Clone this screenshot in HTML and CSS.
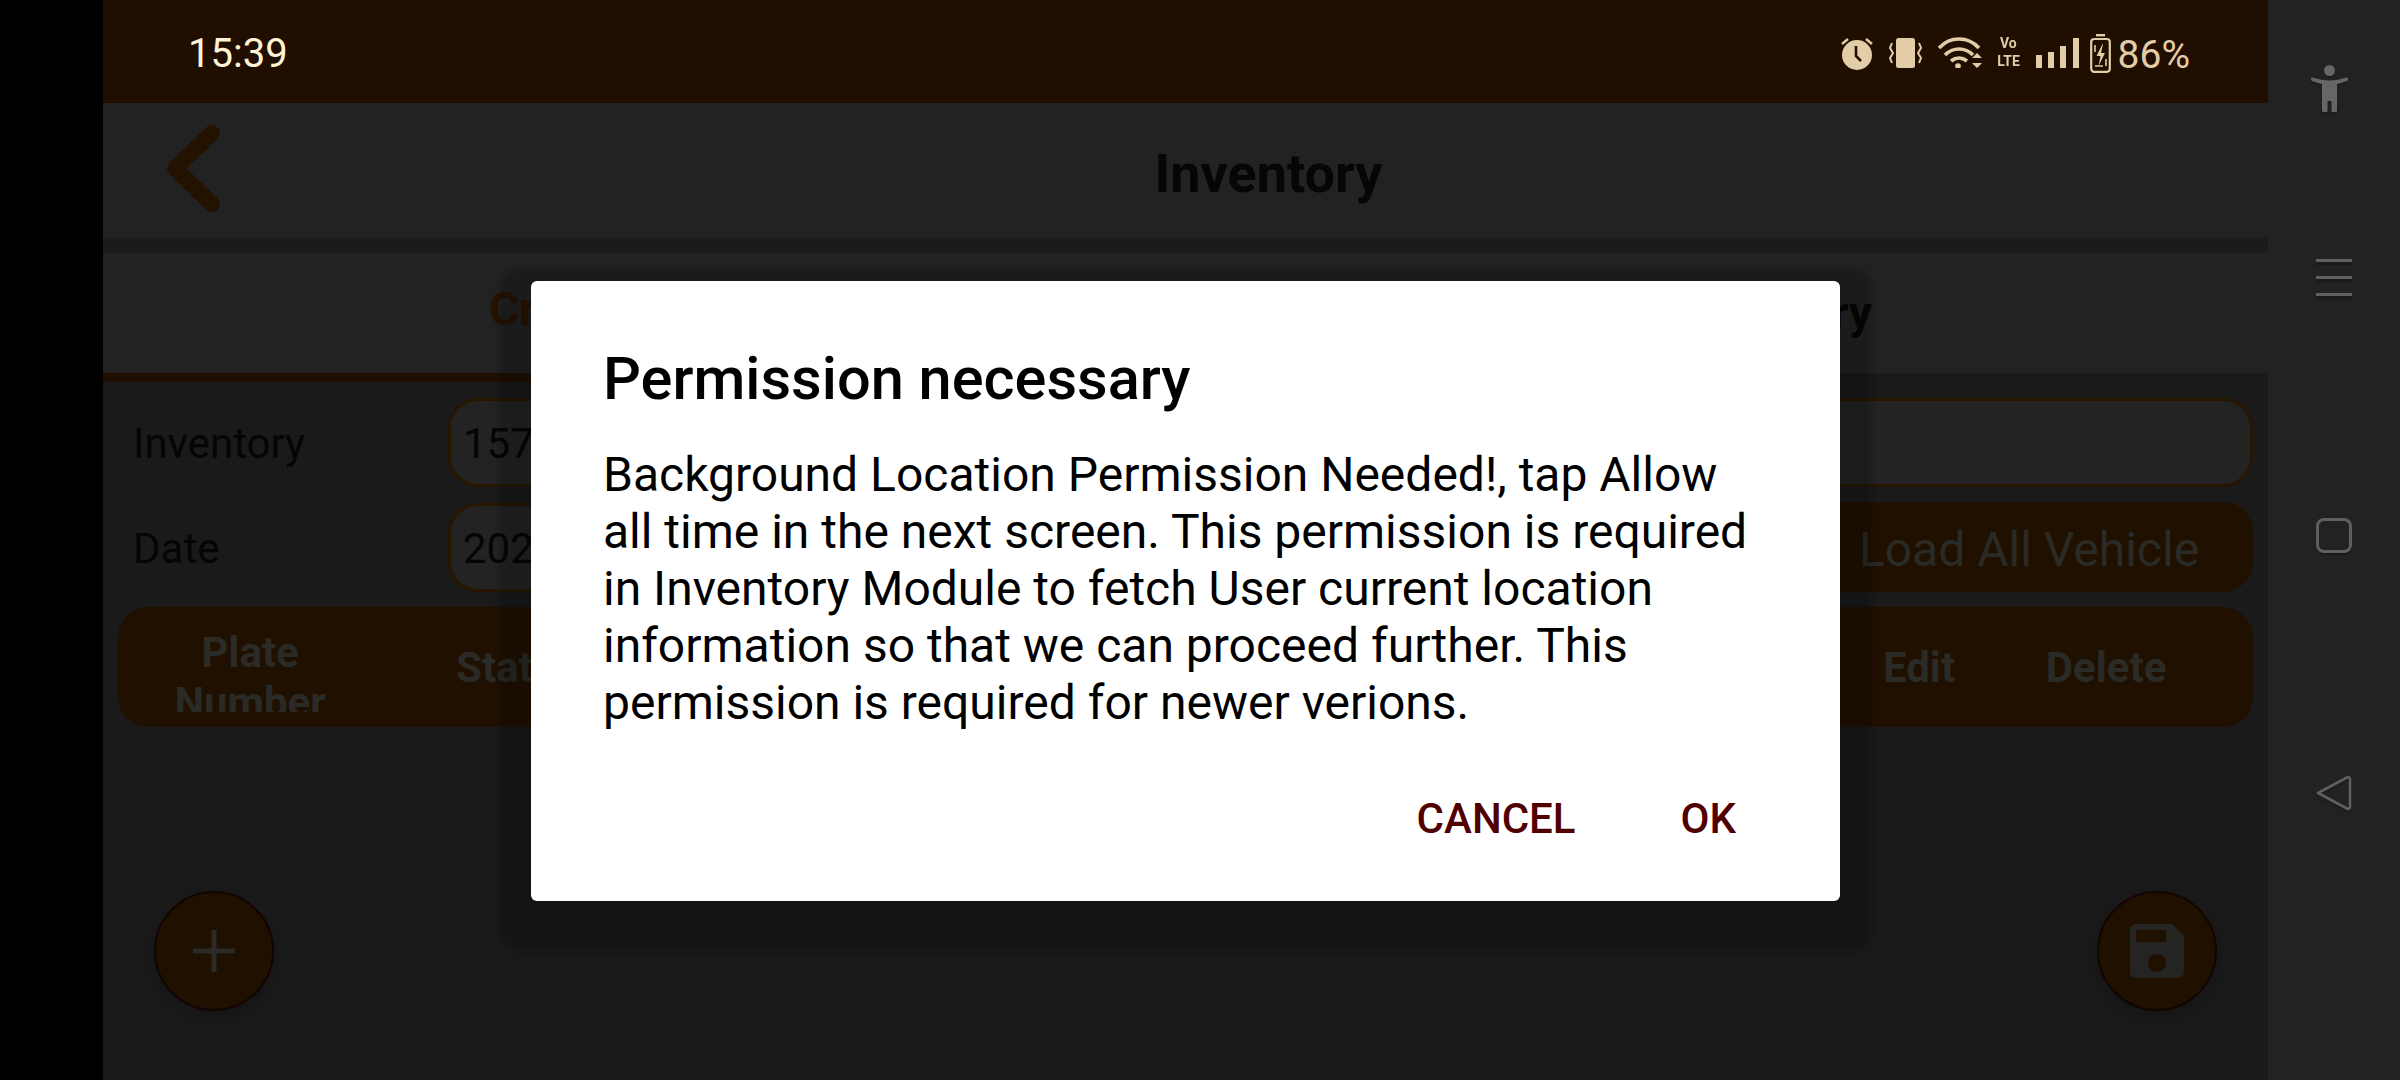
FILE: index.html

```html
<!DOCTYPE html>
<html lang="en-us">
  <head>
    <meta charset="utf-8">
    <title>Inventory</title>
    <link rel="stylesheet" href="styles.css">
  </head>
  <body>
    <div class="cutout"></div>

    <div class="screen">
      <div class="statusbar">
        <span class="clock">15:39</span>
        <div class="status-icons">
          <svg class="ic-alarm" viewBox="0 0 32 34">
            <path d="M1 8 7 3M31 8 25 3" fill="none" stroke="#e2cda8" stroke-width="2.4"/>
            <circle cx="16" cy="19" r="15" fill="#e2cda8"/>
            <path d="M15 10v10l5 5" fill="none" stroke="#201000" stroke-width="2.6"/>
          </svg>
          <svg class="ic-vibrate" viewBox="0 0 33 30">
            <rect x="7" y="0" width="19" height="30" rx="2.5" fill="#e2cda8"/>
            <path d="M3 5 1 10l3 5-3 5 2 5M30 5l2 5-3 5 3 5-2 5" fill="none" stroke="#e2cda8" stroke-width="2"/>
          </svg>
          <svg class="ic-wifi" viewBox="0 0 44 33">
            <path d="M1 13C12 1 30 1 41 13M7 20c8-8 20-8 28 0M13 26c5-4 11-4 16 0" fill="none" stroke="#e2cda8" stroke-width="3.6"/>
            <circle cx="20" cy="31" r="2.8" fill="#e2cda8"/>
            <path d="M39 18l5 5H34zM39 33l5-5H34z" fill="#e2cda8"/>
          </svg>
          <div class="volte"><span>Vo</span><span>LTE</span></div>
          <div class="signal">
            <i class="bar-1"></i><i class="bar-2"></i><i class="bar-3"></i><i class="bar-4"></i>
          </div>
          <svg class="ic-battery" viewBox="0 0 21 39">
            <rect x="6" y="0" width="9" height="2.4" fill="#e2cda8"/>
            <rect x="1.2" y="5" width="18.6" height="32.8" rx="3" fill="none" stroke="#e2cda8" stroke-width="2.2"/>
            <path d="M12.5 10 6.500 22h4l-2 10 6.500-13h-4l2-9z" fill="#e2cda8"/>
            <path d="M5 11v7M16 25v7M5 32h8" fill="none" stroke="#e2cda8" stroke-width="1.6"/>
          </svg>
          <span class="percent">86%</span>
        </div>
      </div>

      <div class="toolbar">
        <svg class="back" viewBox="0 0 53 87">
          <path d="M45 8 8 43.500 45 79" fill="none" stroke="#241200" stroke-width="16" stroke-linecap="round" stroke-linejoin="round"/>
        </svg>
        <h1 class="page-title">Inventory</h1>
      </div>
      <div class="toolbar-line"></div>

      <div class="tabs">
        <div class="tab tab-active">Create New</div>
        <div class="tab tab-other">My Inventory</div>
      </div>

      <div class="content">
        <div class="form-row">
          <label class="field-label">Inventory</label>
          <div class="input input-wide">157</div>
        </div>
        <div class="form-row form-row-date">
          <label class="field-label">Date</label>
          <div class="input input-date">202</div>
          <div class="load-btn">Load All Vehicle</div>
        </div>

        <div class="table-head">
          <div class="th th-plate">Plate<br>Number</div>
          <div class="th">Status</div>
          <div class="th"></div>
          <div class="th">Edit</div>
          <div class="th">Delete</div>
        </div>

        <div class="fabs">
          <div class="fab">
            <svg class="fab-plus" viewBox="0 0 42 42">
              <path d="M21 0v42M0 21h42" stroke="#2a2a26" stroke-width="5"/>
            </svg>
          </div>
          <div class="fab">
            <svg class="fab-save" viewBox="3 3 18 18">
              <path d="M17 3H5c-1.110 0-2 .9-2 2v14c0 1.100.89 2 2 2h14c1.100 0 2-.9 2-2V7l-4-4zm-5 16c-1.660 0-3-1.340-3-3s1.340-3 3-3 3 1.340 3 3-1.340 3-3 3zm3-10H5V5h10v4z" fill="#242422"/>
            </svg>
          </div>
        </div>
      </div>
    </div>

    <div class="navbar">
      <svg class="nav-access" viewBox="0 0 37 47">
        <circle cx="18.500" cy="5.500" r="5.500" fill="#666"/>
        <path d="M1.500 12.500C8 14.500 13 15.500 18.500 15.500S29 14.500 35.500 12.500c1-.3 1.500.5 1.500 1.500s-.5 2-1.500 2.300C32 17.500 29 18.500 26 19V45a2.750 2.750 0 0 1-5.500 0V36h-4V45a2.750 2.750 0 0 1-5.500 0V19C8 18.500 5 17.500 1.500 16.300.5 16 0 15 0 14s.5-1.800 1.500-1.500z" fill="#666"/>
      </svg>
      <div class="nav-menu"><i></i><i></i><i></i></div>
      <div class="nav-square"></div>
      <svg class="nav-back" viewBox="0 0 36 36">
        <path d="M2 18 31 2.500c1.500-.8 3 0 3 2v27c0 2-1.500 2.800-3 2z" fill="none" stroke="#5f5f5f" stroke-width="2.600" stroke-linejoin="round"/>
      </svg>
    </div>

    <div class="dialog">
      <h2 class="dialog-title">Permission necessary</h2>
      <p class="dialog-text">Background Location Permission Needed!, tap Allow all time in the next screen. This permission is required in Inventory Module to fetch User current location information so that we can proceed further. This permission is required for newer verions.</p>
      <div class="dialog-actions">
        <span class="dialog-btn">CANCEL</span>
        <span class="dialog-btn">OK</span>
      </div>
    </div>
  </body>
</html>
```

FILE: styles.css

```css
* {
  margin: 0;
  padding: 0;
  box-sizing: border-box;
}
body {
  width: 2400px;
  height: 1080px;
  display: flex;
  overflow: hidden;
  background: #000;
  font-family: Roboto, "Liberation Sans", sans-serif;
}
.cutout {
  width: 103px;
  background: #000;
}
.screen {
  width: 2165px;
  display: flex;
  flex-direction: column;
  background: #1a1a1a;
}

/* status bar */
.statusbar {
  height: 103px;
  background: #200f00;
  display: flex;
  align-items: center;
  justify-content: space-between;
  padding: 0 78px 0 85px;
}
.clock {
  color: #fff3d6;
  font-size: 40px;
  padding-top: 4px;
}
.status-icons {
  display: flex;
  align-items: center;
  gap: 16px;
  color: #e2cda8;
}
.ic-alarm { width: 32px; height: 34px; margin-top: 2px; }
.ic-vibrate { width: 33px; height: 30px; margin-top: 2px; }
.ic-wifi { width: 44px; height: 33px; }
.volte {
  width: 22px;
  display: flex;
  flex-direction: column;
  align-items: center;
  font-size: 15.5px;
  font-weight: 700;
  line-height: 18px;
}
.volte span {
  transform: scaleX(.9);
}
.signal {
  width: 43px;
  height: 30px;
  display: flex;
  align-items: flex-end;
  justify-content: space-between;
  margin-top: 2px;
}
.signal i {
  display: block;
  width: 6px;
  background: #e2cda8;
}
.bar-1 { height: 13px; }
.bar-2 { height: 16px; }
.bar-3 { height: 22px; }
.bar-4 { height: 30px; }
.ic-battery { width: 21px; height: 39px; margin: 3px -9px 0 -5px; }
.percent {
  font-size: 39px;
  margin-top: 6px;
}

/* toolbar */
.toolbar {
  height: 135px;
  background: #222;
  display: flex;
  align-items: center;
  justify-content: center;
  padding: 6px 0 0 166px;
  position: relative;
}
.back {
  position: absolute;
  left: 64px;
  top: 22px;
  width: 53px;
  height: 87px;
}
.page-title {
  color: #060606;
  font-size: 54px;
  font-weight: 700;
}
.toolbar-line {
  height: 15px;
  background: #1b1b1b;
}
.tabs {
  height: 120px;
  background: #222;
  display: flex;
}
.tab {
  flex: 1;
  display: flex;
  align-items: center;
  font-size: 46px;
  font-weight: 700;
  color: #060606;
}
.tab-active {
  color: #261300;
  height: 129px;
  padding: 0 0 9px 386px;
  border-bottom: 9px solid #1f0f00;
  background: #222;
}
.tab-other {
  justify-content: flex-end;
  padding-right: 396px;
}

/* form */
.content {
  flex: 1;
  display: flex;
  flex-direction: column;
  padding: 25px 15px 0 15px;
}
.form-row {
  display: flex;
  align-items: center;
  height: 89px;
}
.form-row-date {
  margin-top: 15px;
  height: 90px;
}
.field-label {
  width: 330px;
  padding: 2px 0 0 15px;
  font-size: 42px;
  color: #050505;
}
.input {
  height: 89px;
  border: 3px solid #271700;
  border-radius: 30px;
  background: #232323;
  color: #050505;
  font-size: 42px;
  line-height: 85px;
  padding-left: 12px;
}
.input-wide {
  flex: 1;
}
.input-date {
  width: 1320px;
}
.load-btn {
  flex: 1;
  height: 90px;
  margin-left: 37px;
  background: #201000;
  border-radius: 30px;
  color: #2a2a26;
  font-size: 48px;
  line-height: 96px;
  text-align: center;
}
.table-head {
  height: 120px;
  margin-top: 15px;
  background: #201000;
  border-radius: 30px;
  display: grid;
  grid-template-columns: 264px 270px 1fr 186px 188px;
  padding-right: 53px;
  align-items: center;
}
.th {
  color: #2a2a26;
  font-size: 42px;
  font-weight: 700;
  text-align: center;
}
.th-plate {
  height: 105px;
  line-height: 50px;
  padding-top: 21px;
  overflow: hidden;
  align-self: start;
}
.fabs {
  display: flex;
  justify-content: space-between;
  padding: 164px 36px 0 36px;
}
.fab {
  width: 120px;
  height: 120px;
  border-radius: 50%;
  background: #201000;
  border: 2px solid #120400;
  box-shadow: 0 6px 14px rgba(0,0,0,.2);
  display: flex;
  align-items: center;
  justify-content: center;
}
.fab-plus { width: 42px; height: 42px; }
.fab-save { width: 54px; height: 54px; }

/* nav bar */
.navbar {
  width: 132px;
  background: #222;
  display: flex;
  flex-direction: column;
  align-items: flex-start;
  padding: 65px 0 0 48px;
}
.nav-access {
  width: 37px;
  height: 47px;
  margin-left: -5px;
  filter: drop-shadow(0 2px 1px #1b1b1b);
}
.nav-menu {
  width: 36px;
  height: 37px;
  margin-top: 147px;
  display: flex;
  flex-direction: column;
  justify-content: space-between;
}
.nav-menu i {
  display: block;
  height: 3px;
  background: #5f5f5f;
  box-shadow: 0 3px 1px #1b1b1b;
}
.nav-square {
  width: 36px;
  height: 35px;
  margin-top: 222px;
  border: 3px solid #5f5f5f;
  border-radius: 8px;
  box-shadow: 0 2px 1px #1b1b1b;
}
.nav-back {
  width: 36px;
  height: 36px;
  margin-top: 222px;
  filter: drop-shadow(0 2px 1px #1b1b1b);
}

/* dialog */
.dialog {
  position: absolute;
  left: 531px;
  top: 281px;
  width: 1309px;
  height: 620px;
  background: #fff;
  border-radius: 6px;
  box-shadow: 0 19px 6px 32px rgba(0,0,0,.2);
  padding: 64px 72px 0 72px;
  display: flex;
  flex-direction: column;
}
.dialog-title {
  font-size: 59.5px;
  font-weight: 500;
  line-height: 68px;
  color: #000;
}
.dialog-text {
  margin-top: 33px;
  font-size: 48px;
  line-height: 57px;
  color: #000;
}
.dialog-actions {
  display: flex;
  justify-content: flex-end;
  gap: 105px;
  margin-top: 63px;
  padding-right: 32px;
}
.dialog-btn {
  color: #500000;
  font-size: 42px;
  font-weight: 500;
}
```
